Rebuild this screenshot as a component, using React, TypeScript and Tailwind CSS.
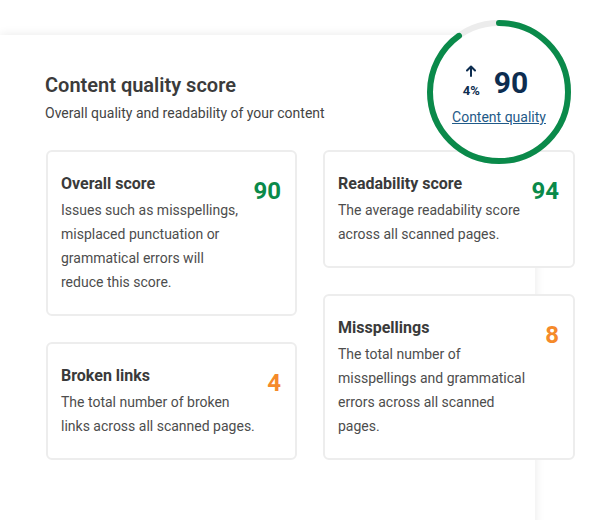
import React from "react";

type CardProps = {
  title: string;
  desc: string;
  value: string;
  color: string;
  width: string;
};

function Card({ title, desc, value, color, width }: CardProps) {
  return (
    <div
      className={`${width} bg-white border-2 border-[#ededed] rounded-[6px] pt-[20px] pb-[20px] pl-[13px] pr-[14px] flex justify-between gap-[10px]`}
    >
      <div className="flex-1 min-w-0">
        <div className="text-[16px] leading-[24px] font-bold text-[#3a3a3a]">{title}</div>
        <div className="mt-[2px] text-[14px] leading-[24px] text-[#4d4d4d]">{desc}</div>
      </div>
      <div className={`shrink-0 mt-[3px] text-[24px] leading-[32px] font-bold ${color}`}>{value}</div>
    </div>
  );
}

export default function App() {
  return (
    <div className="w-[610px] h-[520px] bg-white overflow-hidden font-['Roboto',_sans-serif]">
      <div className="pt-[35px]">
        <div className="relative w-[535px] h-[520px] bg-white shadow-[0_0_10px_rgba(0,0,0,0.09)] pl-[45px] pt-[37px]">
          <h1 className="text-[20px] leading-[26px] font-semibold text-[#3b3b3b]">Content quality score</h1>
          <p className="mt-[5px] text-[14px] leading-[20px] text-[#444444]">
            Overall quality and readability of your content
          </p>

          <div className="absolute left-[427px] top-[-15px] w-[144px] h-[144px] rounded-full bg-white">
            <svg className="absolute inset-0" width="144" height="144" viewBox="0 0 144 144">
              <circle cx="72" cy="72" r="69" fill="none" stroke="#ececec" strokeWidth="6" />
              <circle
                cx="72"
                cy="72"
                r="69"
                fill="none"
                stroke="#0a8a4a"
                strokeWidth="6"
                strokeLinecap="round"
                strokeDasharray={`${2 * Math.PI * 69 * 0.9} ${2 * Math.PI * 69}`}
                transform="rotate(-90 72 72)"
              />
            </svg>
            <div className="relative flex flex-col items-center pt-[45px]">
              <div className="flex items-end pr-[8px]">
                <div className="flex flex-col items-center w-[19px] mr-[13px]">
                  <svg width="10" height="12" viewBox="0 0 10 12">
                    <path
                      d="M5 11 V1.5 M1 5.5 L5 1.5 L9 5.5"
                      fill="none"
                      stroke="#0d2d50"
                      strokeWidth="2"
                      strokeLinecap="round"
                      strokeLinejoin="round"
                    />
                  </svg>
                  <span className="mt-[6px] text-[13px] leading-[15px] font-bold text-[#0d2d50]">4%</span>
                </div>
                <span className="text-[30px] leading-[30px] font-bold text-[#0d2d50] mt-[3px]">90</span>
              </div>
              <a className="mt-[9px] text-[14px] leading-[20px] text-[#1f5a88] underline">Content quality</a>
            </div>
          </div>

          <div className="mt-[27px] ml-[1px] flex gap-[26px] items-start">
            <div className="flex flex-col gap-[26px]">
              <Card
                width="w-[251px]"
                title="Overall score"
                desc="Issues such as misspellings, misplaced punctuation or grammatical errors will reduce this score."
                value="90"
                color="text-[#0a8a4a]"
              />
              <Card
                width="w-[251px]"
                title="Broken links"
                desc="The total number of broken links across all scanned pages."
                value="4"
                color="text-[#f58a2a]"
              />
            </div>
            <div className="flex flex-col gap-[26px]">
              <Card
                width="w-[252px]"
                title="Readability score"
                desc="The average readability score across all scanned pages."
                value="94"
                color="text-[#0a8a4a]"
              />
              <Card
                width="w-[252px]"
                title="Misspellings"
                desc="The total number of misspellings and grammatical errors across all scanned pages."
                value="8"
                color="text-[#f58a2a]"
              />
            </div>
          </div>
        </div>
      </div>
    </div>
  );
}
